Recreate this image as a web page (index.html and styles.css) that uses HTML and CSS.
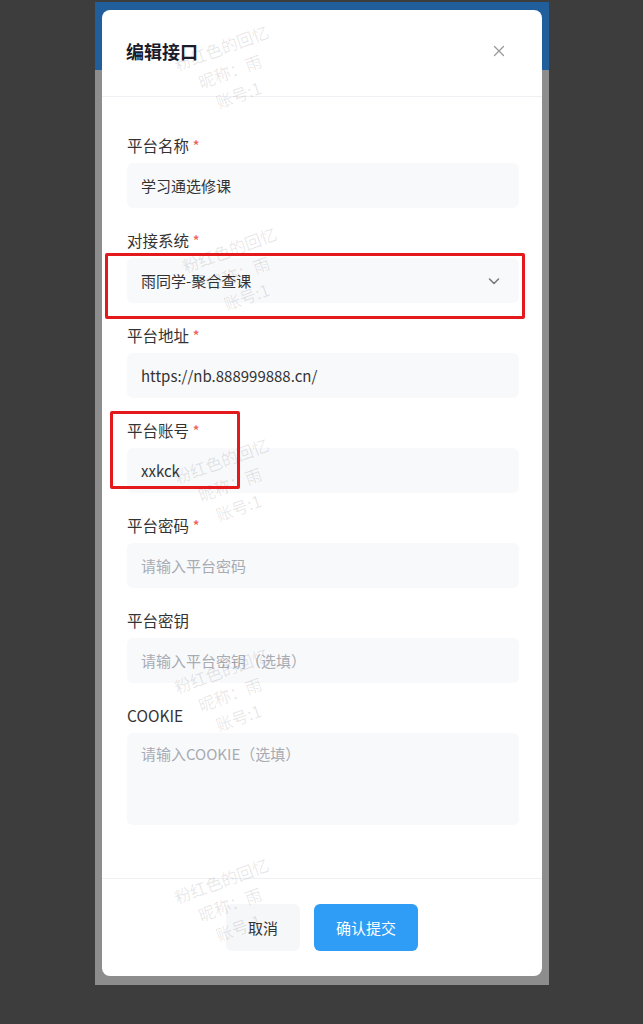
FILE: index.html
```html
<!DOCTYPE html>
<html lang="zh-CN">
<head>
<meta charset="utf-8">
<title>编辑接口</title>
<link rel="stylesheet" href="styles.css">
</head>
<body>
<div class="frame">
  <div class="modal">
    <div class="modal-header">
      <h2 class="modal-title">编辑接口</h2>
      <button class="close" aria-label="关闭">
        <svg width="12" height="12" viewBox="0 0 12 12"><path d="M1.5 1.5 L10.5 10.5 M10.5 1.5 L1.5 10.5" stroke="#9a9a9a" stroke-width="1.3" fill="none" stroke-linecap="round"/></svg>
      </button>
    </div>
    <div class="modal-body">
      <div class="field">
        <label class="label">平台名称 <span class="req">*</span></label>
        <div class="input">学习通选修课</div>
      </div>
      <div class="field">
        <label class="label">对接系统 <span class="req">*</span></label>
        <div class="input select">
          <span>雨同学-聚合查课</span>
          <svg width="14" height="14" viewBox="0 0 14 14"><path d="M2.5 5 L7 9.5 L11.5 5" stroke="#777" stroke-width="1.5" fill="none" stroke-linecap="round" stroke-linejoin="round"/></svg>
        </div>
      </div>
      <div class="field">
        <label class="label">平台地址 <span class="req">*</span></label>
        <div class="input">https://nb.888999888.cn/</div>
      </div>
      <div class="field">
        <label class="label">平台账号 <span class="req">*</span></label>
        <div class="input">xxkck</div>
      </div>
      <div class="field">
        <label class="label">平台密码 <span class="req">*</span></label>
        <div class="input placeholder">请输入平台密码</div>
      </div>
      <div class="field">
        <label class="label">平台密钥</label>
        <div class="input placeholder">请输入平台密钥（选填）</div>
      </div>
      <div class="field">
        <label class="label">COOKIE</label>
        <div class="input textarea placeholder">请输入COOKIE（选填）</div>
      </div>
    </div>
    <div class="modal-footer">
      <button class="btn btn-cancel">取消</button>
      <button class="btn btn-primary">确认提交</button>
    </div>

    <div class="wm wm1"><span>粉红色的回忆</span><span>昵称：雨</span><span>账号:1</span></div>
    <div class="wm wm2"><span>粉红色的回忆</span><span>昵称：雨</span><span>账号:1</span></div>
    <div class="wm wm3"><span>粉红色的回忆</span><span>昵称：雨</span><span>账号:1</span></div>
    <div class="wm wm4"><span>粉红色的回忆</span><span>昵称：雨</span><span>账号:1</span></div>
    <div class="wm wm5"><span>粉红色的回忆</span><span>昵称：雨</span><span>账号:1</span></div>

    <div class="mark mark1"></div>
    <div class="mark mark2"></div>
  </div>
</div>
</body>
</html>
```

FILE: styles.css
```css
* { box-sizing: border-box; }
html, body { margin: 0; padding: 0; }
body {
  background: #3d3d3d;
  width: 643px;
  height: 1024px;
  overflow: hidden;
  font-family: "Noto Sans CJK SC", "Noto Sans", sans-serif;
  color: #333;
}
.frame {
  margin: 2px 0 0 95px;
  width: 454px;
  padding: 8px 7px 9px;
  background: linear-gradient(#215e9c 0, #215e9c 68px, #8d8d8d 68px);
}
.modal {
  position: relative;
  background: #fff;
  border-radius: 8px;
  overflow: hidden;
}
.modal-header {
  height: 87px;
  display: flex;
  align-items: center;
  justify-content: space-between;
  padding: 0 37px 4px 24px;
  border-bottom: 1px solid #eef0f3;
}
.modal-title {
  margin: 0;
  font-size: 18px;
  font-weight: 700;
  color: #1b1b2b;
}
.close {
  border: 0;
  background: none;
  padding: 0;
  display: flex;
  width: 12px;
  height: 12px;
}
.modal-body {
  padding: 37px 23px 32px 25px;
}
.field { margin-bottom: 21px; }
.label {
  display: block;
  font-size: 15.5px;
  line-height: 22px;
  color: #333;
  margin-bottom: 7px;
}
.req { color: #f05a5a; }
.input {
  height: 45px;
  background: #f8f9fb;
  border-radius: 6px;
  padding: 0 14px;
  display: flex;
  align-items: center;
  font-size: 15px;
  color: #333;
}
.input.placeholder { color: #a8abb2; }
.select { justify-content: space-between; padding-right: 18px; }
.textarea {
  height: 92px;
  align-items: flex-start;
  padding-top: 10px;
}
.modal-footer {
  border-top: 1px solid #eef0f3;
  padding: 25px 0 25px;
  display: flex;
  justify-content: center;
  gap: 14px;
}
.btn {
  height: 47px;
  border: 0;
  border-radius: 6px;
  font-family: inherit;
  font-size: 15px;
  padding: 0 22px;
}
.btn-cancel { background: #f6f7f9; color: #333; }
.btn-primary { background: #2f9cf6; color: #fff; }

.wm {
  position: absolute;
  width: 150px;
  display: flex;
  flex-direction: column;
  align-items: center;
  gap: 4px;
  transform: rotate(-20deg);
  font-size: 16.5px;
  line-height: 21px;
  color: rgba(0, 0, 0, 0.10);
  pointer-events: none;
}
.wm1 { left: 53px; top: 26px; }
.wm2 { left: 61px; top: 228px; }
.wm3 { left: 53px; top: 439px; }
.wm4 { left: 53px; top: 649px; }
.wm5 { left: 53px; top: 859px; }

.mark {
  position: absolute;
  border: 3px solid #e3191b;
  border-radius: 2px;
  pointer-events: none;
}
.mark1 { left: 3px; top: 243px; width: 420px; height: 66px; }
.mark2 { left: 8px; top: 401px; width: 130px; height: 78px; }
```
